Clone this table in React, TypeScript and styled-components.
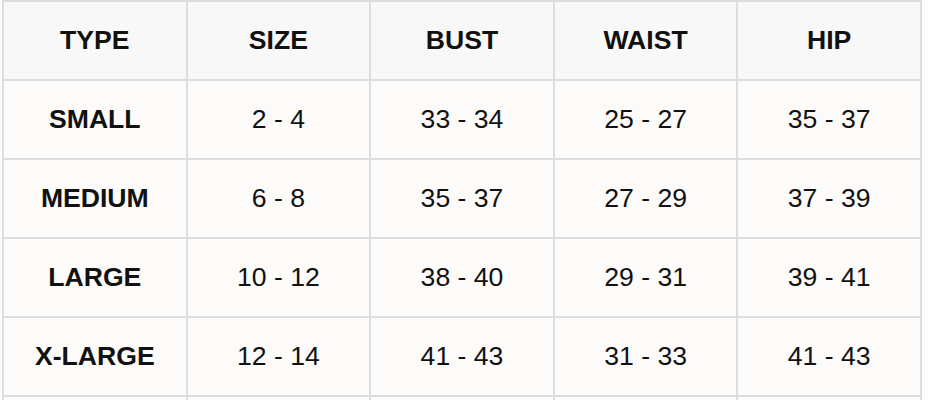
import styled, { createGlobalStyle } from "styled-components";

const GlobalStyle = createGlobalStyle`
    html, body {
        margin: 0;
        padding: 0;
        background: #fdfcfb;
    }
    body {
        font-family: "Liberation Sans", Arial, Helvetica, sans-serif;
        color: #111;
    }
`;

const Wrapper = styled.div`
    padding: 0 6px 0 2px;
`;

const Grid = styled.div`
    display: grid;
    grid-template-columns: repeat(5, 1fr);
    width: 920px;
    box-sizing: border-box;
    border-top: 2px solid #dddddd;
    border-left: 2px solid #dddddd;
`;

const Cell = styled.div<{ $head?: boolean; $bold?: boolean }>`
    height: 79px;
    box-sizing: border-box;
    display: flex;
    align-items: center;
    justify-content: center;
    border-right: 2px solid #dddddd;
    border-bottom: 2px solid #dddddd;
    background: ${(p) => (p.$head ? "#f8f8f8" : "#fcfbfa")};
    font-size: 26.6px;
    font-weight: ${(p) => (p.$bold ? 700 : 400)};
    white-space: nowrap;
`;

const headers = ["TYPE", "SIZE", "BUST", "WAIST", "HIP"];

const rows = [
    ["SMALL", "2 - 4", "33 - 34", "25 - 27", "35 - 37"],
    ["MEDIUM", "6 - 8", "35 - 37", "27 - 29", "37 - 39"],
    ["LARGE", "10 - 12", "38 - 40", "29 - 31", "39 - 41"],
    ["X-LARGE", "12 - 14", "41 - 43", "31 - 33", "41 - 43"],
    ["", "", "", "", ""],
];

export default function App() {
    return (
        <>
            <GlobalStyle />
            <Wrapper>
                <Grid>
                    {headers.map((h) => (
                        <Cell key={h} $head $bold>{h}</Cell>
                    ))}
                    {rows.map((row, r) =>
                        row.map((value, i) => (
                            <Cell key={r + "-" + i} $bold={i === 0}>{value}</Cell>
                        ))
                    )}
                </Grid>
            </Wrapper>
        </>
    );
}
